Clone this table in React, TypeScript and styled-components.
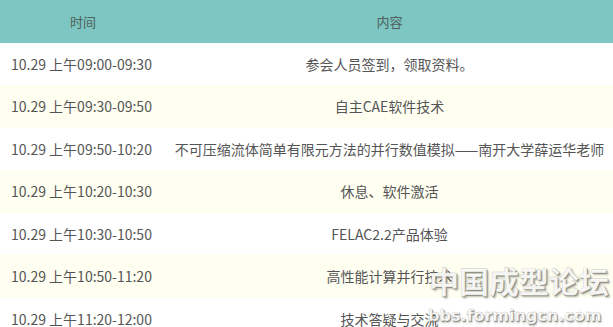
import React from 'react'
import styled, { createGlobalStyle } from 'styled-components'

const GlobalStyle = createGlobalStyle`
  html, body {
    margin: 0;
    padding: 0;
    background: #ffffff;
  }
  body {
    font-family: "Noto Sans CJK SC", "Noto Sans", sans-serif;
  }
`

const Page = styled.div`
  position: relative;
  width: 613px;
  height: 327px;
  overflow: hidden;
`

const Table = styled.div`
  display: grid;
  grid-template-columns: 166px 1fr;
  grid-auto-rows: 42.5px;
`

const HeadCell = styled.div`
  height: 43px;
  display: flex;
  align-items: center;
  justify-content: center;
  background: #7dc6c1;
  color: #4f5f5d;
  font-size: 13px;
`

const Cell = styled.div<{ $odd: boolean; $center?: boolean }>`
  display: flex;
  align-items: center;
  justify-content: ${p => (p.$center ? 'center' : 'flex-start')};
  padding-left: ${p => (p.$center ? '0' : '11px')};
  background: ${p => (p.$odd ? '#fefef1' : '#ffffff')};
  color: #555555;
  font-size: 14px;
  white-space: nowrap;
`

// watermark sits over the bottom-right corner of the table
const Watermark = styled.div`
  position: absolute;
  left: 428px;
  top: 262px;
  display: flex;
  flex-direction: column;
  align-items: flex-start;
  pointer-events: none;
`

const MarkTitle = styled.div`
  margin-left: 1px;
  font-size: 30px;
  font-weight: 700;
  line-height: 36px;
  color: rgba(255, 255, 255, 0.92);
  -webkit-text-stroke: 0.4px rgba(150, 150, 140, 0.6);
  text-shadow: 1px 1px 0 rgba(110, 110, 100, 0.6), 2px 2px 2px rgba(80, 80, 70, 0.35);
`

const MarkUrl = styled.div`
  font-family: "DejaVu Sans", sans-serif;
  font-size: 16px;
  font-weight: 700;
  line-height: 20px;
  margin-top: 8px;
  color: rgba(255, 255, 255, 0.95);
  -webkit-text-stroke: 0.4px rgba(150, 150, 140, 0.6);
  text-shadow: 1px 1px 0 rgba(110, 110, 100, 0.6), 1px 2px 2px rgba(80, 80, 70, 0.35);
`

const rows = [
  ['10.29 上午09:00-09:30', '参会人员签到，领取资料。'],
  ['10.29 上午09:30-09:50', '自主CAE软件技术'],
  ['10.29 上午09:50-10:20', '不可压缩流体简单有限元方法的并行数值模拟——南开大学薛运华老师'],
  ['10.29 上午10:20-10:30', '休息、软件激活'],
  ['10.29 上午10:30-10:50', 'FELAC2.2产品体验'],
  ['10.29 上午10:50-11:20', '高性能计算并行技术'],
  ['10.29 上午11:20-12:00', '技术答疑与交流'],
]

const App = () => {
  return (
    <Page>
      <GlobalStyle />
      <Table>
        <HeadCell>时间</HeadCell>
        <HeadCell>内容</HeadCell>
        {rows.map(([time, text], i) => (
          <React.Fragment key={time}>
            <Cell $odd={i % 2 === 1}>{time}</Cell>
            <Cell $odd={i % 2 === 1} $center>{text}</Cell>
          </React.Fragment>
        ))}
      </Table>
      <Watermark>
        <MarkTitle>中国成型论坛</MarkTitle>
        <MarkUrl>bbs.formingcn.com</MarkUrl>
      </Watermark>
    </Page>
  )
}

export default App
